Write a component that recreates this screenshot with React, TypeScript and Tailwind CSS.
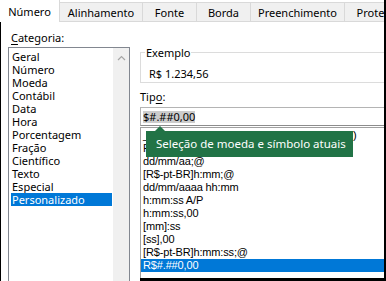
import React from 'react';

const tabs = [
  { label: 'Número', w: 'w-[60px]', active: true },
  { label: 'Alinhamento', w: 'w-[83px]' },
  { label: 'Fonte', w: 'w-[54px]' },
  { label: 'Borda', w: 'w-[54px]' },
  { label: 'Preenchimento', w: 'w-[94px]' },
  { label: 'Proteção', w: 'w-[70px]' },
];

const categories = [
  'Geral',
  'Número',
  'Moeda',
  'Contábil',
  'Data',
  'Hora',
  'Porcentagem',
  'Fração',
  'Científico',
  'Texto',
  'Especial',
  'Personalizado',
];

// first two rows sit behind the tooltip
const formats = [
  '_([R$] * #.##0,00_);[Vermelho](R$* #.##0,00)',
  'R$ #.##0,00;[Vermelho]-R$ #.##0,00',
  'dd/mm/aa;@',
  '[R$-pt-BR]h:mm;@',
  'dd/mm/aaaa hh:mm',
  'h:mm:ss A/P',
  'h:mm:ss,00',
  '[mm]:ss',
  '[ss],00',
  '[R$-pt-BR]h:mm:ss;@',
  'R$#.##0,00',
];

export default function App() {
  return (
    <div className="w-[386px] h-[281px] overflow-hidden bg-white border-r-2 border-black flex flex-col font-['Noto_Sans',sans-serif] text-[11px] text-black">
      {/* Tabs */}
      <div className="flex h-[22px] shrink-0">
        {tabs.map((t) =>
          t.active ? (
            <div
              key={t.label}
              className={`${t.w} shrink-0 h-[22px] bg-white border-r border-[#d9d9d9] flex items-center justify-center leading-[13px]`}
            >
              {t.label}
            </div>
          ) : (
            <div
              key={t.label}
              className={`${t.w} shrink-0 h-[20px] self-end bg-[#f0f0f0] border-r border-t border-b border-[#d9d9d9] flex items-center justify-center pt-[1px] leading-[13px] whitespace-nowrap`}
            >
              {t.label}
            </div>
          )
        )}
      </div>

      {/* Body */}
      <div className="flex flex-1 min-h-0 border-l border-black">
        {/* Category column */}
        <div className="w-[139px] shrink-0 flex flex-col pl-[7px] pt-[9px]">
          <div className="pl-[3px] leading-[13px]">
            <span className="underline underline-offset-2">C</span>ategoria:
          </div>
          <div className="mt-[3px] w-[122px] flex-1 flex border border-b-0 border-[#828790]">
            <div className="flex-1 flex flex-col pt-[2px] pl-[2px] pr-[1px]">
              {categories.map((c) => (
                <div
                  key={c}
                  className={`h-[13px] leading-[13px] px-[1px] whitespace-nowrap ${
                    c === 'Personalizado' ? 'bg-[#0078d7] text-white' : ''
                  }`}
                >
                  {c}
                </div>
              ))}
            </div>
            <div className="w-[16px] shrink-0 bg-[#f0f0f0] flex justify-center">
              <svg width="9" height="6" viewBox="0 0 9 6" className="mt-[7px]">
                <path d="M1 5 L4.5 1.5 L8 5" fill="none" stroke="#a6a6a6" strokeWidth="1.2" />
              </svg>
            </div>
          </div>
        </div>

        {/* Right column */}
        <div className="relative w-[262px] shrink-0 flex flex-col pt-[24px] border-b-[3px] border-black">
          <fieldset className="border border-[#dcdcdc]">
            <legend className="ml-[4px] px-[1px] leading-[13px]">Exemplo</legend>
            <div className="pl-[8px] pt-[8px] pb-[2px] leading-[13px]">R$ 1.234,56</div>
          </fieldset>

          <div className="mt-[7px] leading-[13px]">
            Tip<span className="underline underline-offset-2">o</span>:
          </div>

          <div className="mt-[4px] h-[19px] border border-[#b4b4b4] border-b-[#8c8c8c] flex items-center pl-[2px]">
            <span className="bg-[#cccccc] leading-[12px]">$#.##0,00</span>
          </div>

          <div className="mt-[1px] flex-1 border-t border-l border-[#a0a0a0] flex flex-col pt-[1px] font-['Liberation_Sans',Arial,sans-serif] text-[11px] tracking-[-0.15px]">
            {formats.map((f, i) => (
              <div
                key={f}
                className={`h-[13px] leading-[13px] pl-[2px] whitespace-nowrap ${
                  i === formats.length - 1 ? 'bg-[#0078d7] text-white' : ''
                }`}
              >
                {f}
              </div>
            ))}
          </div>

          {/* Tooltip */}
          <svg
            width="10"
            height="5"
            viewBox="0 0 10 5"
            className="absolute left-[15px] top-[104px]"
          >
            <polygon points="0,5 5,0 10,5" fill="#217346" />
          </svg>
          <div className="absolute left-[6px] top-[109px] w-[207px] h-[26px] bg-[#217346] text-white text-[11.5px] leading-[26px] pl-[10px] whitespace-nowrap">
            Seleção de moeda e símbolo atuais
          </div>
        </div>
      </div>
    </div>
  );
}
